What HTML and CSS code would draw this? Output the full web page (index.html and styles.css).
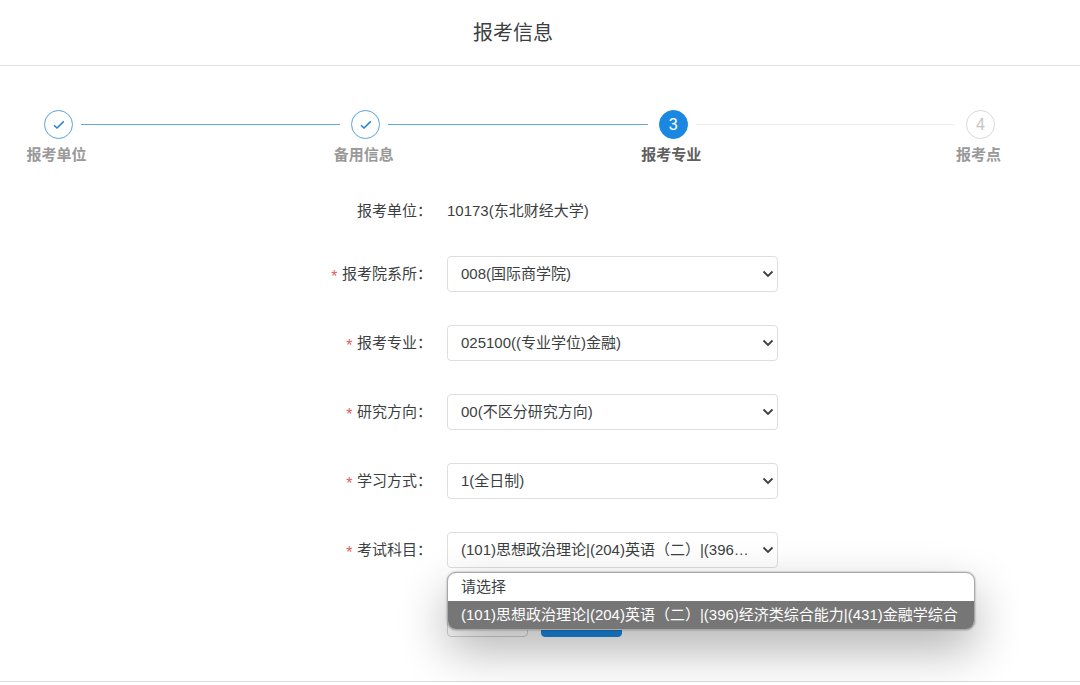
FILE: index.html
```html
<!DOCTYPE html>
<html lang="zh-CN">
<head>
<meta charset="utf-8">
<meta name="viewport" content="width=device-width, initial-scale=1">
<title>报考信息</title>
<link rel="stylesheet" href="styles.css">
</head>
<body>
<header class="page-header"><h1 class="page-title">报考信息</h1></header>
<main class="content">
  <ol class="steps">
    <li class="step done">
      <div class="step-head"><span class="step-icon"><svg width="12" height="10" viewBox="0 0 12 10" aria-hidden="true"><path d="M1 5.2 4 8 10.8 1.4"/></svg></span><span class="step-line"></span></div>
      <div class="step-title">报考单位</div>
    </li>
    <li class="step done">
      <div class="step-head"><span class="step-icon"><svg width="12" height="10" viewBox="0 0 12 10" aria-hidden="true"><path d="M1 5.2 4 8 10.8 1.4"/></svg></span><span class="step-line"></span></div>
      <div class="step-title">备用信息</div>
    </li>
    <li class="step current" aria-current="step">
      <div class="step-head"><span class="step-icon">3</span><span class="step-line"></span></div>
      <div class="step-title">报考专业</div>
    </li>
    <li class="step">
      <div class="step-head"><span class="step-icon">4</span></div>
      <div class="step-title">报考点</div>
    </li>
  </ol>
  <form class="form">
    <div class="row row-text">
      <span class="label">报考单位：</span>
      <span class="value">10173(东北财经大学)</span>
    </div>
    <div class="row">
      <label class="label" for="dept"><span class="required">*</span>报考院系所：</label>
      <div class="control">
        <select class="select" id="dept"><option>008(国际商学院)</option></select>
        <svg class="arrow" width="12" height="8" viewBox="0 0 12 8" aria-hidden="true"><path d="M1.5 1.5 6 6l4.5-4.5"/></svg>
      </div>
    </div>
    <div class="row">
      <label class="label" for="major"><span class="required">*</span>报考专业：</label>
      <div class="control">
        <select class="select" id="major"><option>025100((专业学位)金融)</option></select>
        <svg class="arrow" width="12" height="8" viewBox="0 0 12 8" aria-hidden="true"><path d="M1.5 1.5 6 6l4.5-4.5"/></svg>
      </div>
    </div>
    <div class="row">
      <label class="label" for="direction"><span class="required">*</span>研究方向：</label>
      <div class="control">
        <select class="select" id="direction"><option>00(不区分研究方向)</option></select>
        <svg class="arrow" width="12" height="8" viewBox="0 0 12 8" aria-hidden="true"><path d="M1.5 1.5 6 6l4.5-4.5"/></svg>
      </div>
    </div>
    <div class="row">
      <label class="label" for="mode"><span class="required">*</span>学习方式：</label>
      <div class="control">
        <select class="select" id="mode"><option>1(全日制)</option></select>
        <svg class="arrow" width="12" height="8" viewBox="0 0 12 8" aria-hidden="true"><path d="M1.5 1.5 6 6l4.5-4.5"/></svg>
      </div>
    </div>
    <div class="row">
      <label class="label" for="subject"><span class="required">*</span>考试科目：</label>
      <div class="control">
        <select class="select" id="subject"><option>(101)思想政治理论|(204)英语（二）|(396)经济类综合能力|(431)金融学综合</option></select>
        <svg class="arrow" width="12" height="8" viewBox="0 0 12 8" aria-hidden="true"><path d="M1.5 1.5 6 6l4.5-4.5"/></svg>
        <ul class="menu" role="listbox" aria-label="考试科目">
          <li class="menu-item" role="option" aria-selected="false">请选择</li>
          <li class="menu-item selected" role="option" aria-selected="true">(101)思想政治理论|(204)英语（二）|(396)经济类综合能力|(431)金融学综合</li>
        </ul>
      </div>
    </div>
    <div class="row">
      <span class="label"></span>
      <div class="actions">
        <button class="button" type="button"></button>
        <button class="button primary" type="button"></button>
      </div>
    </div>
  </form>
</main>
</body>
</html>
```
FILE: styles.css
```css
* { box-sizing: border-box; }

body {
  margin: 0;
  background: #fff;
  color: #3c3f42;
  font: 15px/24px "Liberation Sans", "Noto Sans CJK SC", sans-serif;
  overflow-x: hidden;
}

.page-header {
  padding: 17px 54px 16px 0;
  border-bottom: 1px solid #e2e2e2;
  text-align: center;
}

.page-title {
  margin: 0;
  font-size: 20px;
  line-height: 32px;
  font-weight: 400;
}

.content {
  padding: 44px 0;
  border-bottom: 1px solid #dcdcdc;
}

.steps {
  display: flex;
  margin: 0;
  padding: 0 63px 0 18px;
  list-style: none;
}

.step { flex: 1; }
.step:last-child { flex: none; }

.step-head {
  display: flex;
  align-items: center;
  gap: 8px;
  padding-left: 26px;
}

.step-icon {
  display: flex;
  align-items: center;
  justify-content: center;
  width: 29px;
  height: 29px;
  border: 1px solid #d9d9d9;
  border-radius: 50%;
  color: #c4c4c4;
  font-size: 16px;
}

.step-icon svg,
.arrow {
  fill: none;
  stroke: currentColor;
  stroke-width: 1.8;
}

.step-icon svg { stroke-width: 1.5; }

.step-line {
  flex: 1;
  height: 1px;
  margin-right: -15px;
  background: #ededed;
}

.step-title {
  width: 77px;
  margin-top: 4px;
  color: #999;
  font-weight: 700;
  text-align: center;
}

.done .step-icon { border-color: #57a4da; color: #2583d2; }
.done .step-line { background: #62abd4; }
.current .step-icon { border-color: #1a88e1; background: #1a88e1; color: #fff; }
.current .step-title { color: #606060; }

.form { margin-top: 32px; }

.row {
  display: flex;
  align-items: center;
  gap: 15px;
  margin-bottom: 33px;
}

.row:last-child { margin-bottom: 0; }
.label { width: 40%; text-align: right; }

.required {
  margin-right: 3px;
  color: #e2605c;
  font-family: "Liberation Mono", monospace;
  font-size: 16px;
  line-height: 1;
  vertical-align: -3px;
}

.control {
  position: relative;
  width: 331px;
}

.select {
  display: block;
  width: 100%;
  height: 36px;
  padding: 0 24px 0 13px;
  border: 1px solid #dedede;
  border-radius: 4px;
  appearance: none;
  background: #fff;
  color: inherit;
  font: inherit;
  text-overflow: ellipsis;
}

.arrow {
  position: absolute;
  top: 14px;
  right: 4px;
  pointer-events: none;
}

.menu {
  position: absolute;
  z-index: 1;
  top: calc(100% + 4px);
  left: 0;
  width: 528px;
  margin: 0;
  padding: 0;
  overflow: hidden;
  border: 1px solid #a8a8a8;
  border-radius: 9px;
  background: #fff;
  box-shadow: 0 0 2px rgba(0, 0, 0, 0.4), 0 20px 48px rgba(0, 0, 0, 0.3);
  list-style: none;
}

.menu-item {
  padding: 2px 13px;
  white-space: nowrap;
}

.selected { background: #767676; color: #fff; }

.actions { display: flex; gap: 13px; }

.button {
  width: 81px;
  height: 36px;
  border: 1px solid #d4d4d4;
  border-radius: 4px;
  background: #fff;
}

.primary { border-color: #1a88e1; background: #1a88e1; }
```
